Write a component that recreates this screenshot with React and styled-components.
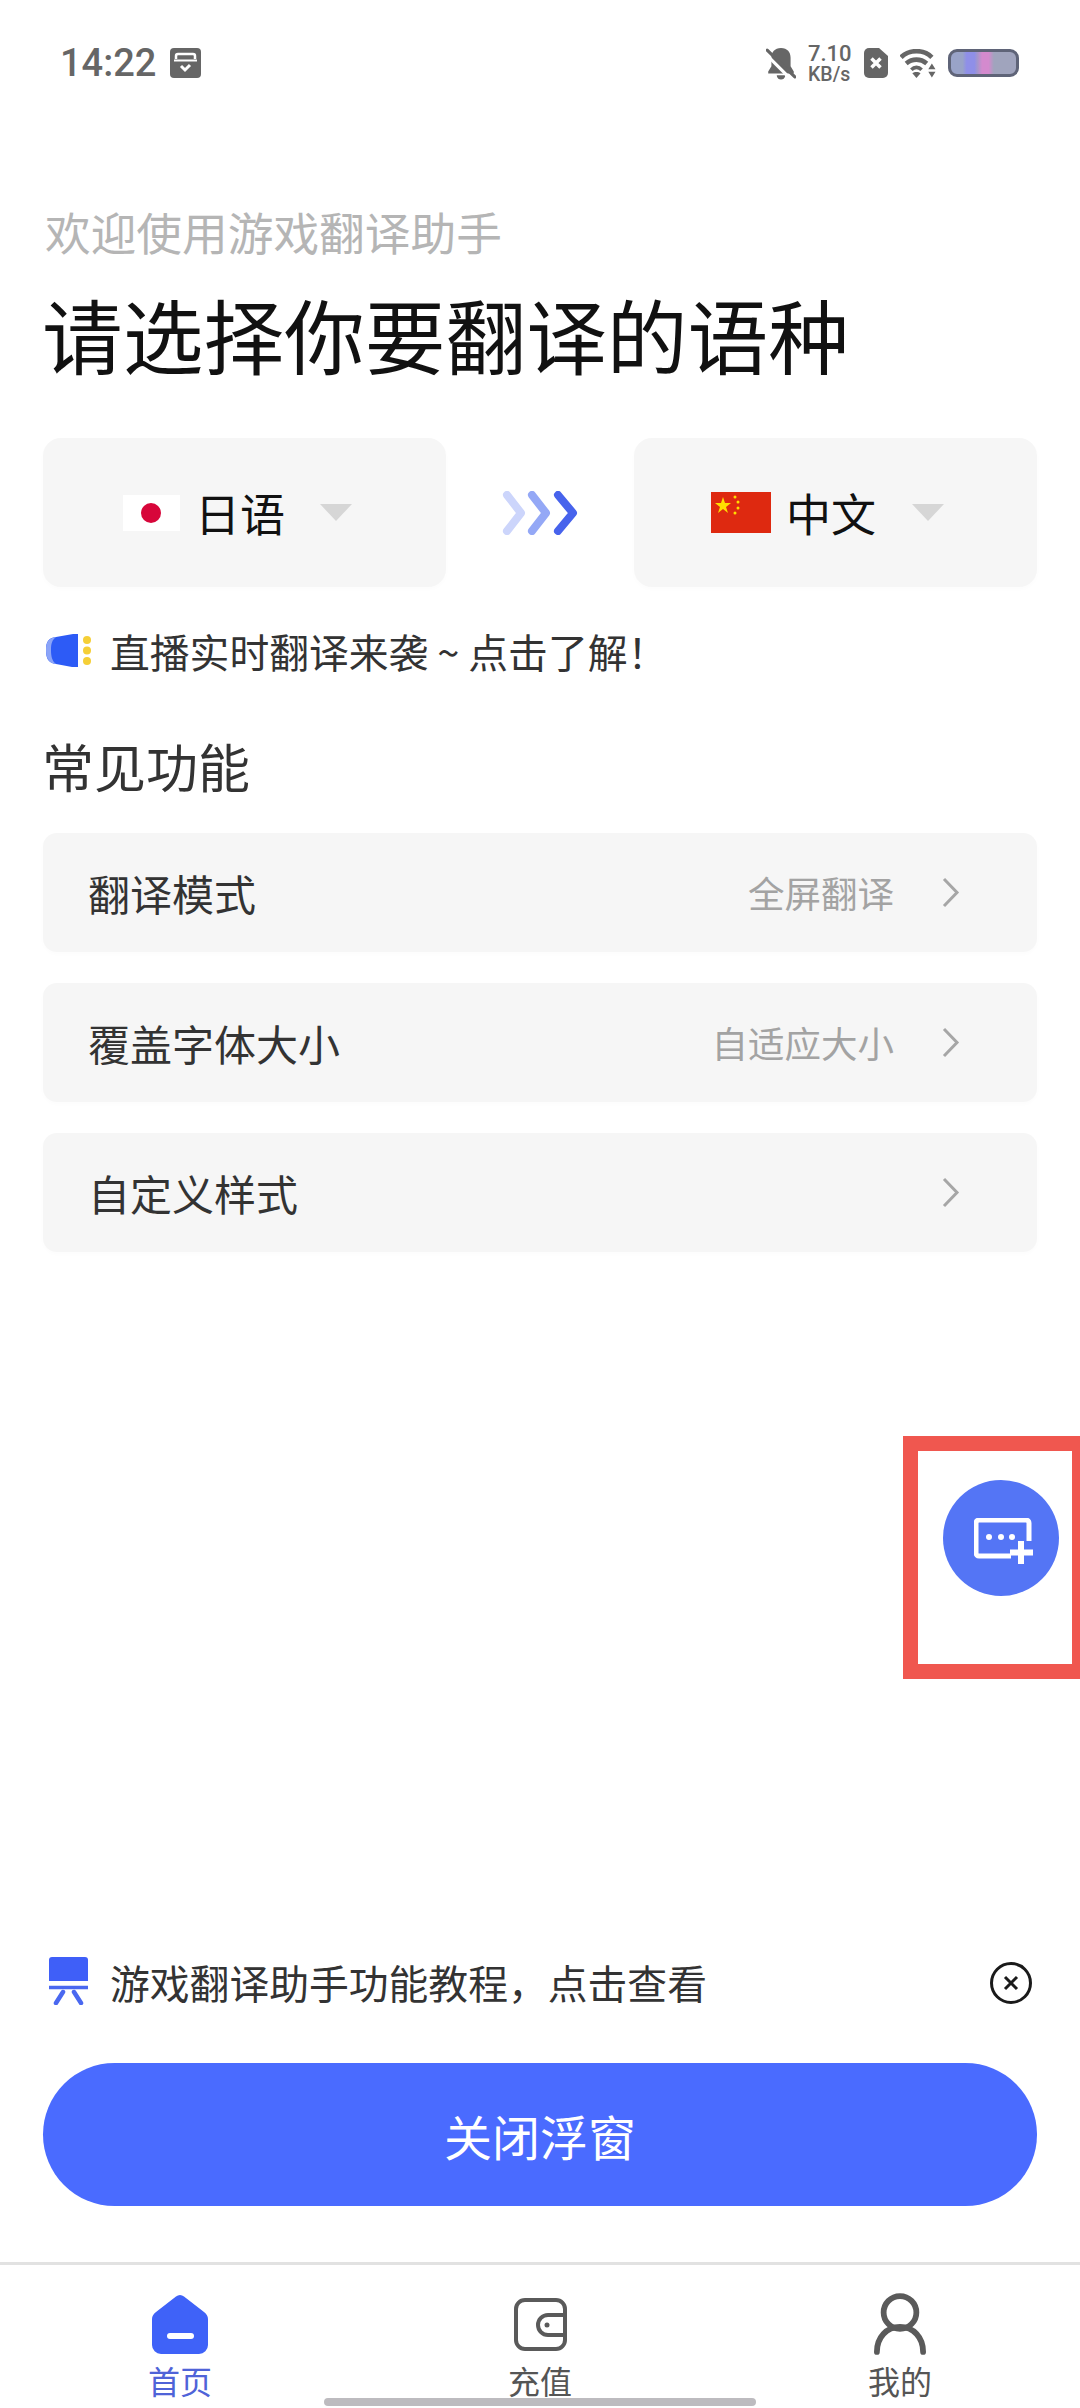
import styled, { createGlobalStyle } from "styled-components";

const GlobalStyle = createGlobalStyle`
  html, body {
    margin: 0;
    padding: 0;
    background: #fff;
    font-family: "Noto Sans CJK SC", "Noto Sans", sans-serif;
  }
  * { box-sizing: border-box; }
`;

function BellOff() {
  return (
    <svg width="30" height="33" viewBox="0 0 28 31">
      <path d="M14 1C8 1 5 5 5 10v8l-3 5v2h24v-2l-3-5v-8c0-5-3-9-9-9z" fill="#666" />
      <path d="M10 26.500a4 4 0 0 0 8 0z" fill="#666" />
      <path d="M-1 6l23 23" stroke="#fff" strokeWidth="3" />
      <path d="M1 3l26 25" stroke="#666" strokeWidth="3" strokeLinecap="round" />
    </svg>
  );
}

function SimIcon() {
  return (
    <svg width="24" height="30" viewBox="0 0 24 30">
      <path d="M5 0h10l9 8v17a5 5 0 0 1-5 5H5a5 5 0 0 1-5-5V5a5 5 0 0 1 5-5z" fill="#666" />
      <path d="M7.500 10.500l9 9M16.500 10.500l-9 9" stroke="#fff" strokeWidth="3.500" />
    </svg>
  );
}

function WifiIcon() {
  return (
    <svg width="36" height="29" viewBox="0 0 35 28" fill="none">
      <path d="M1 8c8-8 22-8 30 0" stroke="#666" strokeWidth="4.500" />
      <path d="M6 14c6-5 14-5 20 0" stroke="#666" strokeWidth="4.500" />
      <path d="M11 20c3-3 7-3 10 0" stroke="#666" strokeWidth="3.500" />
      <path d="M16 28l-4-4.500c2-1.500 6-1.500 8 0z" fill="#666" />
      <path d="M31 14l3.500 5.500h-7zM31 27.500l-3.500-5.500h7z" fill="#666" />
    </svg>
  );
}

function ChecklistIcon() {
  return (
    <svg width="31" height="30" viewBox="0 0 31 30" fill="none">
      <rect width="31" height="30" rx="4" fill="#666" />
      <path d="M6 11V8a2 2 0 0 1 2-2h15a2 2 0 0 1 2 2v3" stroke="#fff" strokeWidth="2.500" />
      <path d="M4 12.500h23" stroke="#fff" strokeWidth="2" />
      <path d="M11 18l4 4 5-5" stroke="#fff" strokeWidth="3" />
    </svg>
  );
}

function JapanFlag() {
  return (
    <FlagBox $w={57} $h={36} $bg="#fff">
      <svg width="57" height="36" viewBox="0 0 57 36">
        <circle cx="28" cy="18" r="10" fill="#d7063a" />
      </svg>
    </FlagBox>
  );
}

function ChinaFlag() {
  return (
    <FlagBox $w={60} $h={41} $bg="#de2910">
      <svg width="60" height="41" viewBox="0 0 60 41">
        <path d="M12 5l2 6h6l-5 4 2 6-5-4-5 4 2-6-5-4h6z" fill="#ffde00" />
        <circle cx="24" cy="5" r="1.500" fill="#ffde00" />
        <circle cx="27" cy="10" r="1.500" fill="#ffde00" />
        <circle cx="27" cy="16" r="1.500" fill="#ffde00" />
        <circle cx="24" cy="21" r="1.500" fill="#ffde00" />
      </svg>
    </FlagBox>
  );
}

function TripleChevron() {
  return (
    <svg width="76" height="44" viewBox="0 0 76 44" fill="none" strokeWidth="8" strokeLinecap="round" strokeLinejoin="round">
      <path d="M5 4l14 18L5 40" stroke="#ccd5fb" />
      <path d="M30 4l14 18-14 18" stroke="#94a8f6" />
      <path d="M56 4l15 18-15 18" stroke="#4763ec" />
    </svg>
  );
}

function HornIcon() {
  return (
    <svg width="46" height="33" viewBox="0 0 46 33">
      <path d="M27 0h5v33h-6L10 30C2 29 0 24 0 16S2 4 10 3z" fill="#2d5bf6" />
      <path d="M10 3C2 4 0 9 0 16s2 13 10 14c-4-3-5-8-5-14S6 6 10 3z" fill="#8ba4f8" />
      <circle cx="41" cy="6" r="4" fill="#f5cf37" />
      <circle cx="41" cy="16.500" r="4" fill="#f5cf37" />
      <circle cx="41" cy="27" r="4" fill="#f5cf37" />
    </svg>
  );
}

function Chevron() {
  return (
    <svg width="18" height="31" viewBox="0 0 18 31" fill="none">
      <path d="M2 2l13 13.500L2 29" stroke="#a6a6a6" strokeWidth="3" />
    </svg>
  );
}

function BoardIcon() {
  return (
    <svg width="39" height="48" viewBox="0 0 39 48" fill="none">
      <path d="M3 0h33a3 3 0 0 1 3 3v21H0V3a3 3 0 0 1 3-3z" fill="#3f5ff8" />
      <path d="M0 30.500h39" stroke="#4a68f0" strokeWidth="3.500" />
      <path d="M14 35L7 46M25 35l7 11" stroke="#4a68f0" strokeWidth="4.500" strokeLinecap="round" />
    </svg>
  );
}

function CloseCircle() {
  return (
    <svg width="42" height="42" viewBox="0 0 42 42" fill="none">
      <circle cx="21" cy="21" r="19.500" stroke="#1a1a1a" strokeWidth="3" />
      <path d="M15 15l12 12M27 15L15 27" stroke="#1a1a1a" strokeWidth="3" />
    </svg>
  );
}

function ChatPlus() {
  return (
    <svg width="60" height="46" viewBox="0 0 60 46" fill="none">
      <path d="M37 38H5a3 3 0 0 1-3-3V5a3 3 0 0 1 3-3h47a3 3 0 0 1 3 3v18" stroke="#fff" strokeWidth="5" />
      <circle cx="15" cy="19" r="3" fill="#fff" />
      <circle cx="27" cy="19" r="3" fill="#fff" />
      <circle cx="38" cy="19" r="3" fill="#fff" />
      <path d="M47 23v23M36 34.500h23" stroke="#fff" strokeWidth="6" />
    </svg>
  );
}

function HomeIcon() {
  return (
    <svg width="56" height="59" viewBox="0 0 56 59">
      <path d="M24 1.500c2.500-2 5.500-2 8 0l20 15.500c2.500 2 4 4 4 7v26a9 9 0 0 1-9 9H9a9 9 0 0 1-9-9V24c0-3 1.500-5 4-7z" fill="#3f62f8" />
      <rect x="15" y="38" width="27" height="6" rx="3" fill="#fff" />
    </svg>
  );
}

function WalletIcon() {
  return (
    <svg width="53" height="53" viewBox="0 0 53 53" fill="none" stroke="#5a5a5a" strokeWidth="4">
      <path d="M51 17v-6a9 9 0 0 0-9-9H11a9 9 0 0 0-9 9v31a9 9 0 0 0 9 9h31a9 9 0 0 0 9-9v-6" />
      <path d="M51 17H34a10 10 0 0 0 0 20h17z" />
      <circle cx="33" cy="27" r="2.500" fill="#5a5a5a" stroke="none" />
    </svg>
  );
}

function UserIcon() {
  return (
    <svg width="52" height="62" viewBox="0 0 54 64" fill="none" stroke="#5a5a5a" strokeWidth="6" strokeLinecap="round">
      <circle cx="27" cy="20" r="17" />
      <path d="M3 61c0-15 10-26 24-26s24 11 24 26" />
    </svg>
  );
}

const Page = styled.div`
  position: relative;
  width: 1080px;
  height: 2408px;
  display: flex;
  flex-direction: column;
  overflow: hidden;
  background: #fff;
`;

const StatusBar = styled.div`
  height: 126px;
  flex-shrink: 0;
  display: flex;
  align-items: center;
  justify-content: space-between;
  padding: 0 61px 0 60px;
`;

const StatusGroup = styled.div`
  display: flex;
  align-items: center;
  gap: ${(p) => p.$gap}px;
`;

const Clock = styled.span`
  font-family: Roboto, sans-serif;
  font-size: 38px;
  font-weight: 500;
  color: #666;
`;

const Speed = styled.div`
  width: 44px;
  display: flex;
  flex-direction: column;
  font-family: Roboto, sans-serif;
  font-weight: 500;
  color: #666;
`;

const SpeedValue = styled.span`
  font-size: 22px;
  line-height: 22px;
`;

const SpeedUnit = styled.span`
  font-size: 19.500px;
  line-height: 19px;
`;

const Battery = styled.div`
  width: 71px;
  height: 28px;
  border: 3px solid #5f6478;
  border-radius: 9px;
  background: linear-gradient(
    90deg,
    #99a3c8 0 18%,
    #8f8fe8 24% 36%,
    #a596cc 41%,
    #d48ace 48% 58%,
    #a0a4bd 66% 100%
  );
`;

const Main = styled.div`
  padding: 75px 43px 0;
  display: flex;
  flex-direction: column;
  flex: 1;
`;

const Greeting = styled.div`
  font-size: 45.700px;
  line-height: 60px;
  color: #b5b5b5;
  padding-left: 2px;
`;

const Heading = styled.h1`
  margin: 22px 0 3px -1px;
  font-size: 80.700px;
  line-height: 100px;
  font-weight: 400;
  color: #111;
`;

const LanguageRow = styled.div`
  margin-top: 52px;
  display: flex;
  align-items: center;
  justify-content: space-between;
`;

const LanguageCard = styled.div`
  width: 403px;
  height: 149px;
  background: #f6f6f6;
  border-radius: 18px;
  box-shadow: 0 2px 5px rgba(0, 0, 0, 0.015);
  display: flex;
  align-items: center;
  padding-left: ${(p) => p.$left}px;
`;

const FlagBox = styled.div`
  width: ${(p) => p.$w}px;
  height: ${(p) => p.$h}px;
  background: ${(p) => p.$bg};
  display: flex;
  flex-shrink: 0;
`;

const LanguageName = styled.span`
  margin-left: ${(p) => p.$left}px;
  font-size: 45px;
  line-height: 60px;
  color: #111;
`;

const Caret = styled.span`
  margin-left: ${(p) => p.$left}px;
  width: 0;
  height: 0;
  border-left: 16px solid transparent;
  border-right: 16px solid transparent;
  border-top: 17px solid #d6d6d6;
`;

const IconTextRow = styled.div`
  display: flex;
  align-items: center;
  height: 60px;
  font-size: 39.800px;
  color: #333;
  padding-left: 3px;
  margin-top: ${(p) => p.$top || 0}px;
`;

const RowIcon = styled.div`
  width: 64px;
  display: flex;
  flex-shrink: 0;
  padding-left: ${(p) => p.$left || 0}px;
`;

const SectionTitle = styled.h2`
  margin: 51px 0 4px -1px;
  font-size: 52px;
  line-height: 70px;
  font-weight: 400;
  color: #333;
`;

const SettingList = styled.div`
  margin-top: 28px;
  display: flex;
  flex-direction: column;
  gap: 31px;
`;

const SettingRow = styled.div`
  height: 119px;
  background: #f6f6f6;
  border-radius: 14px;
  box-shadow: 0 2px 5px rgba(0, 0, 0, 0.015);
  display: flex;
  align-items: center;
  padding: 0 77px 0 45px;
`;

const SettingLabel = styled.span`
  flex: 1;
  font-size: 42px;
  color: #333;
`;

const SettingValue = styled.span`
  margin-right: 48px;
  font-size: 36.500px;
  color: #a3a3a3;
`;

const Footer = styled.div`
  margin-top: auto;
  display: flex;
  flex-direction: column;
`;

const TutorialRow = styled(IconTextRow)`
  justify-content: space-between;
  padding-right: 5px;
`;

const TutorialLabel = styled.div`
  display: flex;
  align-items: center;
  margin-top: -4px;
`;

const PrimaryButton = styled.button`
  margin: 50px 0 56px;
  height: 143px;
  width: 100%;
  border: none;
  border-radius: 72px;
  background: #4a6bff;
  color: #fff;
  font-family: inherit;
  font-size: 48px;
`;

const TabBar = styled.div`
  position: relative;
  height: 146px;
  flex-shrink: 0;
  border-top: 3px solid #e2e2e2;
  display: grid;
  grid-template-columns: 360px 360px 360px;
`;

const Tab = styled.div`
  display: flex;
  flex-direction: column;
  align-items: center;
  justify-content: flex-end;
  color: ${(p) => (p.$active ? "#4f63d8" : "#555")};
  font-size: 32px;
  line-height: 40px;
  padding-bottom: 8px;
`;

const TabIcon = styled.div`
  height: 72px;
  display: flex;
  align-items: center;
`;

const HomeIndicator = styled.div`
  position: absolute;
  left: 324px;
  bottom: 2px;
  width: 432px;
  height: 8px;
  border-radius: 4px;
  background: #bdbbbf;
`;

const Highlight = styled.div`
  position: absolute;
  left: 903px;
  top: 1436px;
  width: 184px;
  height: 243px;
  border: 15px solid #f0574f;
`;

const FloatingButton = styled.div`
  position: absolute;
  left: 943px;
  top: 1480px;
  width: 116px;
  height: 116px;
  border-radius: 50%;
  background: #5475f5;
  display: flex;
  align-items: center;
  justify-content: center;
  padding-left: 6px;
  padding-top: 6px;
`;

const settings = [
  { label: "翻译模式", value: "全屏翻译" },
  { label: "覆盖字体大小", value: "自适应大小" },
  { label: "自定义样式" },
];

export default function App() {
  return (
    <>
      <GlobalStyle />
      <Page>
        <StatusBar>
          <StatusGroup $gap={14}>
            <Clock>14:22</Clock>
            <ChecklistIcon />
          </StatusGroup>
          <StatusGroup $gap={12}>
            <BellOff />
            <Speed>
              <SpeedValue>7.10</SpeedValue>
              <SpeedUnit>KB/s</SpeedUnit>
            </Speed>
            <SimIcon />
            <WifiIcon />
            <Battery />
          </StatusGroup>
        </StatusBar>
        <Main>
          <Greeting>欢迎使用游戏翻译助手</Greeting>
          <Heading>请选择你要翻译的语种</Heading>
          <LanguageRow>
            <LanguageCard $left={80}>
              <JapanFlag />
              <LanguageName $left={15}>日语</LanguageName>
              <Caret $left={35} />
            </LanguageCard>
            <TripleChevron />
            <LanguageCard $left={77}>
              <ChinaFlag />
              <LanguageName $left={15}>中文</LanguageName>
              <Caret $left={36} />
            </LanguageCard>
          </LanguageRow>
          <IconTextRow $top={33}>
            <RowIcon>
              <HornIcon />
            </RowIcon>
            直播实时翻译来袭 ~ 点击了解！
          </IconTextRow>
          <SectionTitle>常见功能</SectionTitle>
          <SettingList>
            {settings.map((s) => (
              <SettingRow key={s.label}>
                <SettingLabel>{s.label}</SettingLabel>
                {s.value && <SettingValue>{s.value}</SettingValue>}
                <Chevron />
              </SettingRow>
            ))}
          </SettingList>
          <Footer>
            <TutorialRow>
              <TutorialLabel>
                <RowIcon $left={3}>
                  <BoardIcon />
                </RowIcon>
                游戏翻译助手功能教程，点击查看
              </TutorialLabel>
              <CloseCircle />
            </TutorialRow>
            <PrimaryButton>关闭浮窗</PrimaryButton>
          </Footer>
        </Main>
        <TabBar>
          <Tab $active>
            <TabIcon>
              <HomeIcon />
            </TabIcon>
            首页
          </Tab>
          <Tab>
            <TabIcon>
              <WalletIcon />
            </TabIcon>
            充值
          </Tab>
          <Tab>
            <TabIcon>
              <UserIcon />
            </TabIcon>
            我的
          </Tab>
          <HomeIndicator />
        </TabBar>
        <Highlight />
        <FloatingButton>
          <ChatPlus />
        </FloatingButton>
      </Page>
    </>
  );
}
